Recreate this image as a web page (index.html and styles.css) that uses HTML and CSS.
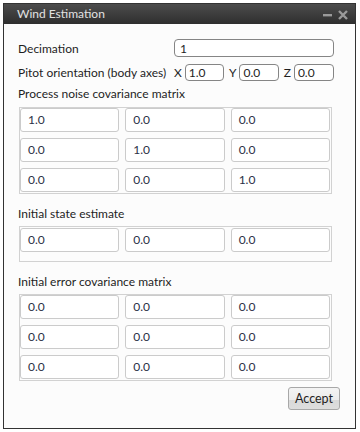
FILE: index.html
```html
<!DOCTYPE html>
<html lang="en">
<head>
  <meta charset="UTF-8">
  <meta name="viewport" content="width=device-width, initial-scale=1.0" />
  <title>Wind Estimation</title>
  <link rel="stylesheet" href="styles.css">
</head>
<body>

  <div class="window">
    <div class="titlebar">
      <span class="title">Wind Estimation</span>
      <div class="controls">
        <svg class="ctl" viewBox="0 0 10 10" width="10" height="10">
          <rect x="0" y="4" width="9" height="2.4" fill="#9a9a9a"/>
        </svg>
        <svg class="ctl" viewBox="0 0 10 10" width="10" height="10">
          <path d="M1 1 L9 9 M9 1 L1 9" stroke="#9a9a9a" stroke-width="2.4"/>
        </svg>
      </div>
    </div>

    <div class="content">
      <div class="row row-dec">
        <span class="label">Decimation</span>
        <input class="field field-wide" type="text" value="1">
      </div>

      <div class="row row-pitot">
        <span class="label">Pitot orientation (body axes)</span>
        <span class="axis">X</span>
        <input class="field field-axis" type="text" value="1.0">
        <span class="axis">Y</span>
        <input class="field field-axis" type="text" value="0.0">
        <span class="axis">Z</span>
        <input class="field field-axis last" type="text" value="0.0">
      </div>

      <div class="section-title first">Process noise covariance matrix</div>
      <div class="matrix">
        <div class="cell">1.0</div><div class="cell">0.0</div><div class="cell">0.0</div>
        <div class="cell">0.0</div><div class="cell">1.0</div><div class="cell">0.0</div>
        <div class="cell">0.0</div><div class="cell">0.0</div><div class="cell">1.0</div>
      </div>

      <div class="section-title">Initial state estimate</div>
      <div class="matrix matrix-state">
        <div class="cell">0.0</div><div class="cell">0.0</div><div class="cell">0.0</div>
      </div>

      <div class="section-title">Initial error covariance matrix</div>
      <div class="matrix">
        <div class="cell">0.0</div><div class="cell">0.0</div><div class="cell">0.0</div>
        <div class="cell">0.0</div><div class="cell">0.0</div><div class="cell">0.0</div>
        <div class="cell">0.0</div><div class="cell">0.0</div><div class="cell">0.0</div>
      </div>

      <div class="footer">
        <button class="btn">Accept</button>
      </div>
    </div>
  </div>

</body>
</html>
```

FILE: styles.css
```css
body {
  margin: 0;
  background: #ffffff;
  font-family: Lato, 'Noto Sans', sans-serif;
  font-size: 12px;
  color: #1e1e1e;
}
.window {
  margin: 3px 0 0 3px;
  width: 351px;
  height: 424px;
  border: 1px solid #333;
  background: #fcfcfc;
  display: flex;
  flex-direction: column;
}
.titlebar {
  height: 20px;
  background: linear-gradient(#4c4c4c, #2e2e2e);
  display: flex;
  align-items: center;
  justify-content: space-between;
  padding: 0 7px 0 13px;
}
.title {
  color: #e2e2e2;
  font-size: 12px;
  line-height: 20px;
}
.controls {
  display: flex;
  gap: 5px;
  margin-top: 1px;
}
.content {
  padding: 15px 21px 0 14px;
  display: flex;
  flex-direction: column;
}
.row {
  display: flex;
  align-items: center;
}
.row-pitot {
  margin-top: 7px;
}
.label {
  width: 156px;
  flex-shrink: 0;
  white-space: nowrap;
}
.field {
  font-family: inherit;
  font-size: 12px;
  color: #1e1e1e;
  background: #fff;
  border: 1px solid #858585;
  border-radius: 4px;
  box-sizing: border-box;
  padding: 0 5px;
  margin: 0;
  outline: none;
  min-width: 0;
}
.field-wide {
  width: 160px;
  height: 18px;
}
.field-axis {
  width: 40px;
  height: 17px;
  padding: 0 3px;
}
.field-axis.last {
  width: 41px;
}
.axis {
  margin-right: 3px;
}
.axis + .field ~ .axis {
  margin-left: 5px;
}
.section-title {
  line-height: 16px;
  margin: 12px 0 4px;
}
.section-title.first {
  margin-top: 5px;
  margin-bottom: 5px;
}
.matrix {
  margin: 0 2px 0 1px;
  border: 1px solid #d2d2d2;
  padding: 0 1px 1px 0;
  display: grid;
  grid-template-columns: 1fr 1fr 1fr;
  gap: 6px;
}
.matrix-state {
  padding-top: 1px;
  padding-bottom: 9px;
}
.cell {
  height: 24px;
  box-sizing: border-box;
  border: 1px solid #cbcbcb;
  border-radius: 3px;
  background: #fff;
  padding-left: 7px;
  line-height: 22px;
  color: #2a3046;
}
.footer {
  display: flex;
  justify-content: flex-end;
  margin: 6px -6px 0 0;
}
.btn {
  width: 52px;
  height: 23px;
  font-family: inherit;
  font-size: 12.5px;
  color: #1e1e1e;
  border: 1px solid #a8a8a8;
  border-radius: 3px;
  background: linear-gradient(#f4f4f4 0%, #ececec 55%, #d9d9d9 56%, #dedede 100%);
  padding: 0;
}
```
